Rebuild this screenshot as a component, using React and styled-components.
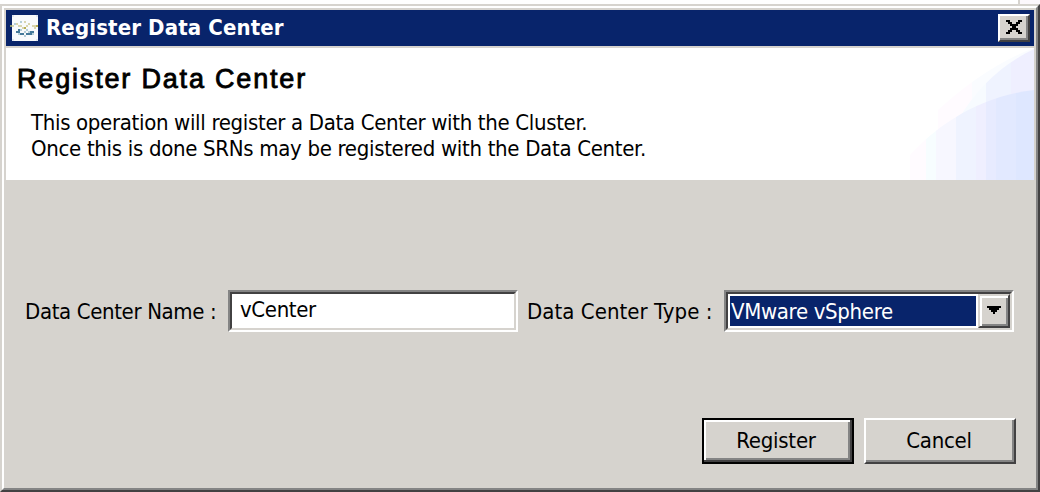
import React from 'react';
import styled, { createGlobalStyle } from 'styled-components';

const FACE = '#d6d3ce';
const GRAY = '#848484';
const DARK = '#424142';
const NAVY = '#08246b';

const Global = createGlobalStyle`
  *, *::before, *::after { box-sizing: border-box; }
  body {
    margin: 0;
    background: #fff;
    overflow: hidden;
    font-family: 'DejaVu Sans Condensed', 'DejaVu Sans', sans-serif;
    font-stretch: condensed;
    font-size: 22px;
    color: #000;
  }
`;

const Desktop = styled.div`
  width: 1040px;
  height: 492px;
  display: flex;
  flex-direction: column;
`;

const Backdrop = styled.div`
  height: 4px;
  margin-left: 1018px;
  border-left: 2px solid ${FACE};
  background: #fcf8fc;
`;

const Frame = styled.div`
  flex: 1;
  display: flex;
  border: 2px solid;
  border-color: ${FACE} ${DARK} ${DARK} ${FACE};
`;

const Window = styled.section`
  flex: 1;
  display: flex;
  flex-direction: column;
  background: ${FACE};
  border: 2px solid;
  border-color: #fff ${GRAY} ${GRAY} #fff;
  padding: 2px;
`;

const TitleBar = styled.header`
  height: 36px;
  flex: none;
  display: flex;
  align-items: center;
  padding: 0 4px;
  background: ${NAVY};
  color: #fff;
`;

const Fit = styled.span`
  white-space: pre;
  line-height: 26px;
  letter-spacing: ${(p) => p.$spacing || 0}px;
`;

const Title = styled(Fit)`
  flex: 1;
  margin-left: 8px;
  font-weight: bold;
`;

const Raised = styled.button`
  display: flex;
  align-items: center;
  justify-content: center;
  padding: 0;
  border: 2px solid;
  border-color: #fff ${DARK} ${DARK} #fff;
  border-radius: 0;
  background: ${FACE};
  box-shadow: inset -2px -2px ${GRAY};
  font: inherit;
  color: inherit;
`;

const CloseButton = styled(Raised)`
  width: 32px;
  height: 28px;
  padding: 0 0 2px;
`;

const Banner = styled.div`
  flex: none;
  display: flex;
  justify-content: space-between;
  height: 132px;
  margin-top: 2px;
  background: #fff;
`;

const BannerText = styled.div`
  display: flex;
  flex-direction: column;
  padding: 15px 0 0 11px;
`;

const Heading = styled.h1`
  margin: 0 0 15px;
  font: 400 27px/32px 'Liberation Sans', sans-serif;
  letter-spacing: 1.82px;
  white-space: pre;
  -webkit-text-stroke: 0.85px #000;
`;

const Description = styled.div`
  display: flex;
  flex-direction: column;
  padding-left: 14px;
`;

const FormRow = styled.div`
  display: flex;
  align-items: center;
  height: 42px;
  margin: 110px 20px 0 19px;
`;

const Label = styled.label`
  display: flex;
  width: ${(p) => p.$width}px;
  padding: 2px 0 0 ${(p) => p.$indent || 0}px;
  flex: none;
`;

const Sunken = styled.div`
  display: flex;
  height: 42px;
  width: 290px;
  flex: none;
  border: 2px solid;
  border-color: ${GRAY} #fff #fff ${GRAY};
`;

const Inset = styled.div`
  flex: 1;
  display: flex;
  border: 2px solid;
  border-color: ${DARK} ${FACE} ${FACE} ${DARK};
  background: #fff;
`;

const InputValue = styled.div`
  padding: 3px 0 0 8px;
`;

const Selected = styled.div`
  flex: 1;
  margin: 2px;
  padding: 3px 0 0 1px;
  background: ${NAVY};
  color: #fff;
`;

const DropButton = styled(Raised)`
  width: 32px;
  padding-bottom: 2px;
  border-color: ${FACE} ${DARK} ${DARK} ${FACE};
  box-shadow: inset 2px 2px #fff, inset -2px -2px ${GRAY};
`;

const Actions = styled.div`
  display: flex;
  justify-content: flex-end;
  gap: 10px;
  margin: 86px 18px 0 0;
`;

const ActionButton = styled(Raised)`
  width: 152px;
  height: 46px;
  padding: 0 2px 0 0;
`;

const DefaultButton = styled(ActionButton)`
  padding-right: 4px;
  border-color: #000;
  box-shadow: inset -2px -2px ${DARK}, inset 2px 2px #fff, inset -4px -4px ${GRAY};
`;

const AppIcon = () => (
  <svg width="28" height="26" viewBox="-1 0 14 13" shapeRendering="crispEdges">
    <path fill="#f8fafc" d="M0 0h13v13H0z" />
    <path fill="#dfe6f1" d="M0 0h1v1H0zM12 0h1v1h-1zM0 12h1v1H0zM12 12h1v1h-1z" />
    <path fill="#8f9a74" d="M-1 5h1v1h-1z" />
    <path fill="#d8d5ae" d="M0 5h1v1H0zM2 4h1v1H2zM3 5h2v1H3zM5 6h1v1H5zM7 5h1v1H7zM8 4h1v1H8zM10 5h2v1h-2zM11 6h1v1h-1zM6 3h1v1H6z" />
    <path fill="#b7ad52" d="M6 6h1v1H6zM12 5h1v1h-1z" />
    <path fill="#b4ced8" d="M4 3h1v1H4zM1 4h1v1H1zM4 7h1v1H4zM7 7h1v1H7zM3 9h1v1H3zM6 8h1v1H6zM6 10h1v1H6zM10 9h1v1h-1zM8 8h1v1H8z" />
    <path fill="#44799a" d="M2 8h2v1H2zM4 9h2v1H4zM7 9h3v1H7zM9 8h2v1H9zM3 7h1v1H3z" />
  </svg>
);

const CloseIcon = () => (
  <svg width="16" height="14" viewBox="0 0 8 7" shapeRendering="crispEdges">
    <path d="M0 0h2v1H0zM6 0h2v1H6zM1 1h2v1H1zM5 1h2v1H5zM2 2h4v1H2zM3 3h2v1H3zM2 4h4v1H2zM1 5h2v1H1zM5 5h2v1H5zM0 6h2v1H0zM6 6h2v1H6z" />
  </svg>
);

const ArrowIcon = () => (
  <svg width="14" height="8" viewBox="0 0 7 4" shapeRendering="crispEdges">
    <path d="M0 0h7v1H0zM1 1h5v1H1zM2 2h3v1H2zM3 3h1v1H3z" />
  </svg>
);

const outerBands = [[28, 34, '#fffbff'], [62, 62, '#fafcff']];
const middleBands = [[46, 30, '#f7fbff'], [76, 25, '#eff3ff'], [101, 23, '#efefff']];
const innerBands = [
  [0, 16, '#fffbff'], [16, 10, '#f7fdff'], [26, 20, '#f7f7ff'], [46, 20, '#eff3ff'],
  [66, 10, '#efefff'], [76, 10, '#e7ebff'], [86, 20, '#e2e9ff'], [106, 18, '#dee7ff'],
];

const Bands = ({ bands, clip }) => (
  <g clipPath={`url(#${clip})`}>
    {bands.map(([x, w, c]) => <rect key={x} x={x} width={w} height="132" fill={c} />)}
  </g>
);

const Swoosh = () => (
  <svg width="124" height="132" viewBox="0 0 124 132">
    <defs>
      <clipPath id="outer"><path d="M124 0Q76 18 28 62V92H124Z" /></clipPath>
      <clipPath id="middle"><path d="M124 1Q76 24 48 72V92H124Z" /></clipPath>
      <clipPath id="inner"><path d="M124 42C70 48 27 77 0 107V132H124Z" /></clipPath>
    </defs>
    <Bands bands={outerBands} clip="outer" />
    <Bands bands={middleBands} clip="middle" />
    <Bands bands={innerBands} clip="inner" />
  </svg>
);

export default function App() {
  return (
    <Desktop>
      <Global />
      <Backdrop />
      <Frame>
        <Window>
          <TitleBar>
            <AppIcon />
            <Title $spacing={0.13}>Register Data Center</Title>
            <CloseButton aria-label="Close"><CloseIcon /></CloseButton>
          </TitleBar>
          <Banner>
            <BannerText>
              <Heading>Register Data Center</Heading>
              <Description>
                <Fit $spacing={-0.33}>This operation will register a Data Center with the Cluster.</Fit>
                <Fit $spacing={-0.31}>Once this is done SRNs may be registered with the Data Center.</Fit>
              </Description>
            </BannerText>
            <Swoosh />
          </Banner>
          <FormRow>
            <Label $width={203}><Fit $spacing={-0.36}>Data Center Name :</Fit></Label>
            <Sunken><Inset><InputValue><Fit $spacing={-0.35}>vCenter</Fit></InputValue></Inset></Sunken>
            <Label $width={206} $indent={9}><Fit $spacing={0.05}>Data Center Type :</Fit></Label>
            <Sunken>
              <Inset>
                <Selected><Fit $spacing={-0.33}>VMware vSphere</Fit></Selected>
                <DropButton aria-label="Open"><ArrowIcon /></DropButton>
              </Inset>
            </Sunken>
          </FormRow>
          <Actions>
            <DefaultButton><Fit $spacing={-0.25}>Register</Fit></DefaultButton>
            <ActionButton><Fit $spacing={-0.25}>Cancel</Fit></ActionButton>
          </Actions>
        </Window>
      </Frame>
    </Desktop>
  );
}
